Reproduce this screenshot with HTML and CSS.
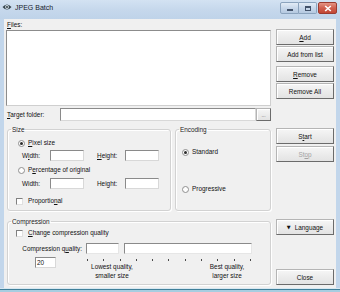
FILE: index.html
```html
<!DOCTYPE html>
<html>
<head>
<meta charset="utf-8">
<link rel="stylesheet" href="styles.css">
</head>
<body>
<div class="window">
  <div class="titlebar">
    <svg class="appicon" width="10" height="8" viewBox="0 0 10 8">
      <path d="M0.5 4 Q5 -1.2 9.5 4 Q5 9.2 0.5 4 Z" fill="#36444c"/>
      <circle cx="5" cy="4" r="1.9" fill="#d9e6ee"/>
      <circle cx="5" cy="4" r="0.9" fill="#222c30"/>
    </svg>
    <span class="title">JPEG Batch</span>
    <div class="caption">
      <span class="cbtn min"><i></i></span>
      <span class="cbtn max"><i></i></span>
      <span class="cbtn close">
        <svg width="8" height="7" viewBox="0 0 8 7"><path d="M1.2 1 L6.8 6 M6.8 1 L1.2 6" stroke="#fff" stroke-width="1.6"/></svg>
      </span>
    </div>
  </div>
  <div class="client">
    <div class="leftcol">
      <div class="lbl files-lbl"><u>F</u>iles:</div>
      <div class="listbox"></div>
      <div class="target-row">
        <span class="lbl target-lbl"><u>T</u>arget folder:</span>
        <div class="edit target-edit"></div>
        <div class="btn dots">...</div>
      </div>
      <div class="groups-row">
        <fieldset class="group size-group">
          <legend>Size</legend>
          <div class="opt r1"><span class="radio checked"></span><span><u>P</u>ixel size</span></div>
          <div class="wh r2">
            <span class="whl">W<u>i</u>dth:</span><span class="edit small"></span>
            <span class="whl hl"><u>H</u>eight:</span><span class="edit small"></span>
          </div>
          <div class="opt r3"><span class="radio"></span><span>P<u>e</u>rcentage of original</span></div>
          <div class="wh r4">
            <span class="whl">Width:</span><span class="edit small"></span>
            <span class="whl hl">Height:</span><span class="edit small"></span>
          </div>
          <div class="opt r5"><span class="check"></span><span>Proportio<u>n</u>al</span></div>
        </fieldset>
        <fieldset class="group enc-group">
          <legend>Encoding</legend>
          <div class="opt e1"><span class="radio checked"></span><span>Standard</span></div>
          <div class="opt e2"><span class="radio"></span><span>Progressive</span></div>
        </fieldset>
      </div>
      <fieldset class="group comp-group">
        <legend>Compression</legend>
        <div class="opt c1"><span class="check"></span><span><u>C</u>hange compression quality</span></div>
        <div class="quality">
          <div class="qleft">
            <div class="qlabel">Compression q<u>u</u>ality:</div>
            <div class="edit qedit">20</div>
          </div>
          <div class="qright">
            <div class="track"><span class="tbox t1"></span><span class="tbox t2"></span></div>
            <div class="ticks"><i></i><i></i><i></i><i></i><i></i><i></i><i></i><i></i><i></i><i></i><i></i></div>
            <div class="qcaps">
              <div class="cap low">Lowest quality,<br>smaller size</div>
              <div class="cap high">Best quality,<br>larger size</div>
            </div>
          </div>
        </div>
      </fieldset>
    </div>
    <div class="rightcol">
      <div class="btn b-add"><u>A</u>dd</div>
      <div class="btn b-addlist">Add from list</div>
      <div class="btn b-remove"><u>R</u>emove</div>
      <div class="btn b-removeall">Remove All</div>
      <div class="btn b-start">S<u>t</u>art</div>
      <div class="btn b-stop disabled">St<u>o</u>p</div>
      <div class="btn b-lang"><span class="arrow">▼</span>Language</div>
      <div class="btn b-close">Close</div>
    </div>
  </div>
  <div class="frame-bottom"></div>
</div>
</body>
</html>
```
FILE: styles.css
```css
* { box-sizing: border-box; }
html, body { margin: 0; padding: 0; background: #ffffff; }
body {
  font-family: "Liberation Sans", Arial, sans-serif;
  font-size: 6.4px;
  color: #111111;
}
.window {
  width: 340px;
  height: 292px;
  background: #c2d6eb;
  display: flex;
  flex-direction: column;
  overflow: hidden;
}
.titlebar {
  height: 19px;
  flex: none;
  display: flex;
  align-items: flex-start;
  background: linear-gradient(180deg, #d3e2f2 0%, #c6d8ec 50%, #bfd3e9 100%);
}
.appicon { margin: 3px 0 0 2px; }
.title {
  margin: 3px 0 0 3px;
  font-size: 7px;
  line-height: 9px;
  color: #18222c;
}
.caption { margin-left: auto; margin-right: 3px; margin-top: 2px; display: flex; }
.cbtn {
  height: 12px;
  display: flex;
  align-items: center;
  justify-content: center;
  border: 1px solid #8ba3bd;
  background: linear-gradient(180deg, #e3ecf6 0%, #c7d7ea 50%, #b5c9e0 100%);
}
.cbtn.min { width: 19px; border-radius: 2px 0 0 2px; }
.cbtn.min i { width: 6px; height: 2px; background: #42526a; margin-top: 3px; }
.cbtn.max { width: 18px; border-left: none; border-radius: 0 2px 2px 0; }
.cbtn.max i { width: 6px; height: 5px; border: 1px solid #42526a; border-top-width: 2px; }
.cbtn.close {
  width: 19px;
  margin-left: 1px;
  border-color: #9b3b30;
  border-radius: 2px;
  background: linear-gradient(180deg, #e49585 0%, #d0604f 50%, #c24634 100%);
}
.client {
  height: 269px;
  flex: none;
  margin: 0 4px;
  background: #f0f0f0;
  display: flex;
  padding-left: 2px;
}
.frame-bottom {
  flex: 1;
  border-top: 1px solid #d8e8f2;
  background: linear-gradient(180deg, #3f7f99 0px, #3f7f99 1px, #a7cde0 1px);
}
.leftcol { width: 265px; display: flex; flex-direction: column; }
.rightcol { width: 58px; margin-left: 5px; display: flex; flex-direction: column; }
.lbl { line-height: 9px; white-space: nowrap; }
.files-lbl { margin-top: 1px; height: 10px; padding-left: 1px; }
.listbox {
  height: 76px;
  background: #fff;
  border: 1px solid #8c8c8c;
  border-right-color: #cfcfcf;
  border-bottom-color: #cfcfcf;
}
.edit {
  background: #fff;
  border: 1px solid;
  border-color: #8a8a8a #d8d8d8 #d8d8d8 #8a8a8a;
}
.target-row { margin-top: 2px; height: 13px; display: flex; align-items: stretch; }
.target-lbl { width: 54px; line-height: 13px; padding-left: 1px; }
.target-edit { width: 196px; }
.btn {
  height: 16px;
  display: flex;
  align-items: center;
  justify-content: center;
  white-space: nowrap;
  background: linear-gradient(180deg, #f6f6f6 0%, #ececec 50%, #e3e3e3 100%);
  border: 1px solid;
  border-color: #b5b5b5 #6b6b6b #6b6b6b #b5b5b5;
  box-shadow: inset 1px 1px 0 #ffffff;
}
.btn.dots { width: 15px; height: 13px; margin-left: 0; color: #555; font-size: 5px; }
.groups-row { margin-top: 4px; height: 86px; display: flex; }
.group {
  margin: 0;
  padding: 0;
  border: 1px solid #d2d2d2;
  border-radius: 3px;
  box-shadow: inset 1px 1px 0 #ffffff, 1px 1px 0 #ffffff;
  min-width: 0;
}
.group legend {
  padding: 0 1px;
  margin-left: 3px;
  line-height: 9px;
  color: #1b1b1b;
}
.size-group { width: 164px; margin-left: 1px; }
.enc-group { width: 96px; margin-left: 4px; }
.opt { display: flex; align-items: center; height: 10px; line-height: 10px; white-space: nowrap; }
.radio {
  width: 7px;
  height: 7px;
  border-radius: 50%;
  border: 1px solid #8f8f8f;
  background: #fdfdfd;
  margin-right: 3px;
  display: flex;
  align-items: center;
  justify-content: center;
  flex: none;
}
.radio.checked::after {
  content: "";
  width: 3px;
  height: 3px;
  border-radius: 50%;
  background: #2b2b2b;
}
.check {
  width: 7px;
  height: 7px;
  border: 1px solid;
  border-color: #808080 #e0e0e0 #e0e0e0 #808080;
  background: #fff;
  margin-right: 5px;
  flex: none;
}
.r1 { margin-top: 4px; padding-left: 10px; }
.wh { display: flex; height: 11px; align-items: stretch; padding-left: 14px; }
.whl { width: 28px; line-height: 11px; white-space: nowrap; }
.whl.hl { margin-left: 13px; }
.edit.small { width: 34px; }
.r2 { margin-top: 2px; }
.r3 { margin-top: 4px; padding-left: 10px; }
.r4 { margin-top: 3px; }
.r5 { margin-top: 7px; padding-left: 8px; }
.e1 { margin-top: 13px; padding-left: 6px; }
.e2 { margin-top: 27px; padding-left: 6px; }
.comp-group { width: 264px; height: 68px; margin-top: 6px; margin-left: 1px; }
.c1 { margin-top: 2px; padding-left: 8px; }
.quality { display: flex; margin-top: 5px; }
.qleft { width: 78px; display: flex; flex-direction: column; }
.qlabel { height: 12px; line-height: 12px; text-align: right; padding-right: 4px; white-space: nowrap; }
.qedit { margin-top: 2px; margin-left: 27px; width: 21px; height: 11px; line-height: 9px; padding-left: 1px; }
.qright { width: 168px; display: flex; flex-direction: column; }
.track { display: flex; height: 11px; }
.tbox {
  display: block;
  height: 11px;
  background: #fff;
  border: 1px solid;
  border-color: #8a8a8a #e6e6e6 #e6e6e6 #8a8a8a;
}
.tbox.t1 { width: 33px; }
.tbox.t2 { width: 128px; margin-left: 5px; }
.ticks {
  display: flex;
  justify-content: space-between;
  width: 165px;
  margin-top: 5px;
  padding-left: 1px;
  height: 2px;
}
.ticks i { width: 1px; height: 2px; background: #4a4a4a; display: block; }
.qcaps { display: flex; margin-top: 1px; }
.cap { line-height: 9px; text-align: center; white-space: nowrap; }
.cap.low { width: 44px; margin-left: 4px; }
.cap.high { width: 38px; margin-left: auto; margin-right: 8px; }
.b-add { margin-top: 10px; }
.b-addlist { margin-top: 1px; }
.b-remove { margin-top: 4px; }
.b-removeall { margin-top: 1px; }
.b-start { margin-top: 29px; }
.b-stop { margin-top: 2px; }
.b-lang { margin-top: 57px; }
.b-close { margin-top: 34px; }
.btn.disabled { color: #a3a3a3; }
.arrow { font-size: 5px; margin-right: 4px; font-family: "DejaVu Sans", sans-serif; }
```
